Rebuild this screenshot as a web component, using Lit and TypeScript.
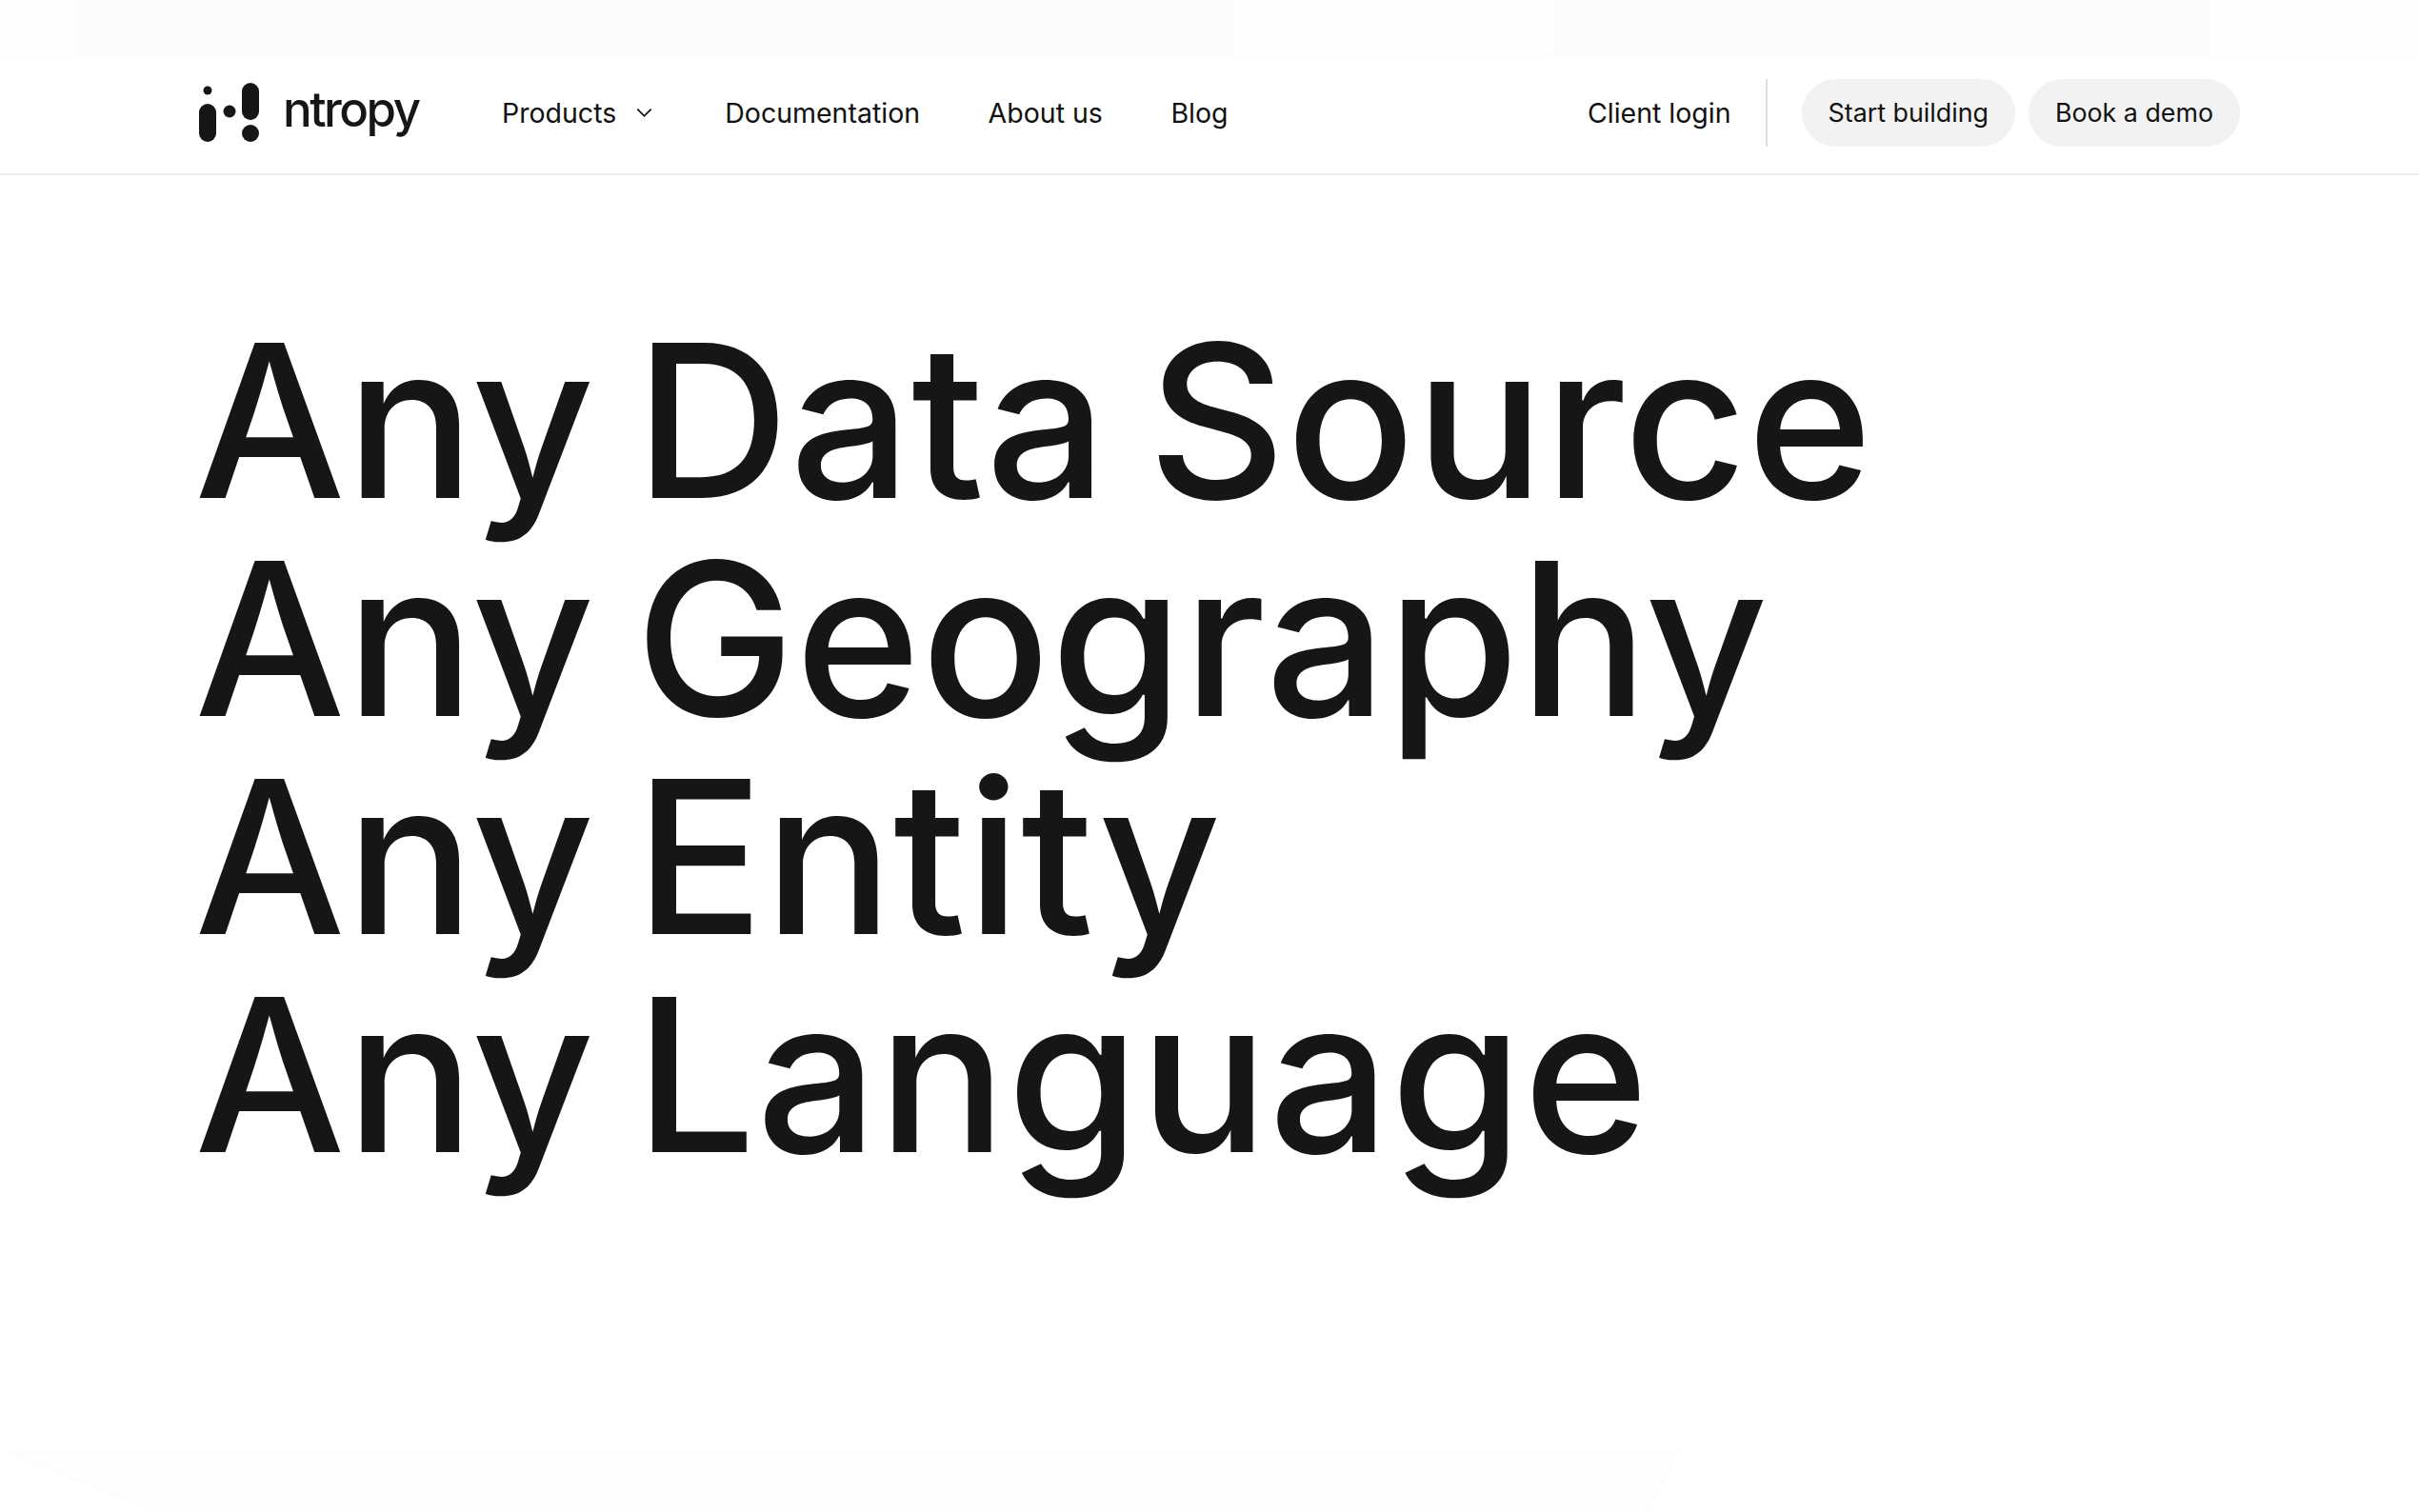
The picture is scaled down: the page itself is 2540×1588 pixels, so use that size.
import { LitElement, css, html } from "lit";
import { customElement } from "lit/decorators.js";

const NAV_LINKS = ["Documentation", "About us", "Blog"];
const HEADLINES = ["Any Data Source", "Any Geography", "Any Entity", "Any Language"];

@customElement("app-root")
export class AppRoot extends LitElement {
  protected override render() {
    return html`
      <div class="top-strip"></div>
      <header class="nav">
        <a class="brand">
          <svg class="mark" viewBox="0 0 63 62" aria-hidden="true">
            <circle cx="9" cy="8" r="4.5" />
            <rect x="0" y="22" width="18" height="40" rx="9" />
            <circle cx="32" cy="30" r="6.5" />
            <rect x="45" y="0" width="18" height="39" rx="9" />
            <circle cx="54" cy="53" r="9" />
          </svg>
          <span class="wordmark">ntropy</span>
        </a>
        <nav class="links">
          <a class="link products">
            Products
            <svg class="chevron" viewBox="0 0 16 10" aria-hidden="true">
              <path d="M1.5 1.5 8 8l6.5-6.5" />
            </svg>
          </a>
          ${NAV_LINKS.map((label) => html`<a class="link">${label}</a>`)}
        </nav>
        <div class="actions">
          <a class="link login">Client login</a>
          <span class="divider"></span>
          <a class="pill">Start building</a>
          <a class="pill">Book a demo</a>
        </div>
      </header>
      <main class="hero">
        ${HEADLINES.map((line) => html`<h1>${line}</h1>`)}
      </main>
      <div class="bottom-strip"></div>
    `;
  }

  public static override styles = css`
    :host {
      display: flex;
      flex-direction: column;
      min-height: 1588px;
      background: #fff;
      color: #161616;
      font-family: Inter, "Liberation Sans", sans-serif;
    }

    .top-strip {
      height: 62px;
      background: linear-gradient(
        90deg,
        #fefefe 0 80px,
        #fcfcfc 80px 1295px,
        #fdfdfd 1295px 1630px,
        #fcfcfc 1630px 2320px,
        #fefefe 2320px
      );
    }

    .nav {
      display: flex;
      align-items: center;
      height: 112px;
      padding: 0 188px 8px 209px;
      border-bottom: 2px solid #ececec;
      box-sizing: content-box;
    }

    .brand {
      display: flex;
      align-items: center;
      gap: 25px;
      width: 318px;
    }

    .mark {
      width: 63px;
      height: 62px;
      fill: #161616;
    }

    .wordmark {
      font-size: 51px;
      font-weight: 500;
      letter-spacing: -2.5px;
      line-height: 1;
      margin-top: -8px;
    }

    .links {
      display: flex;
      align-items: center;
      gap: 71.5px;
    }

    .link {
      font-size: 28.5px;
      color: #111;
      white-space: nowrap;
    }

    .products {
      display: flex;
      align-items: center;
      gap: 20px;
      margin-right: 3.5px;
    }

    .chevron {
      width: 19px;
      height: 11px;
      fill: none;
      stroke: #111;
      stroke-width: 1.6;
    }

    .actions {
      display: flex;
      align-items: center;
      margin-left: auto;
    }

    .divider {
      width: 2px;
      height: 71px;
      margin: 0 36px;
      background: #dedede;
    }

    .pill {
      display: flex;
      align-items: center;
      height: 71px;
      padding: 0 28px;
      margin-right: 14px;
      border-radius: 36px;
      background: #f2f2f2;
      font-size: 26.8px;
      color: #111;
      white-space: nowrap;
    }

    .pill:last-child {
      margin-right: 0;
    }

    .hero {
      flex: 1;
      padding: 143px 0 0 204px;
    }

    h1 {
      margin: 0;
      font-size: 224px;
      font-weight: 470;
      line-height: 229px;
      letter-spacing: 0.6px;
      word-spacing: -18px;
      white-space: nowrap;
    }

    .bottom-strip {
      height: 64px;
      margin-right: 774px;
      background: #fdfdfd;
      clip-path: polygon(0 0, 100% 0, 98% 100%, 160px 100%);
    }
  `;
}
